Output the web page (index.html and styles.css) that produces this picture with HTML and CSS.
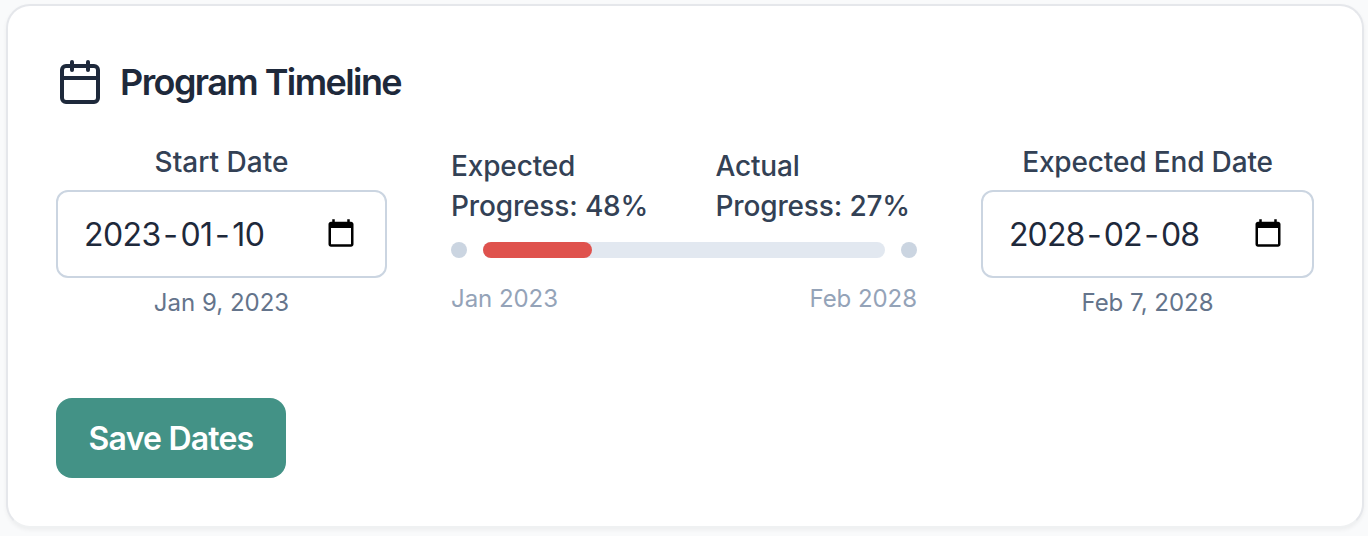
FILE: index.html
```html
<!DOCTYPE html>
<html lang="en">
<head>
<meta charset="utf-8">
<title>Program Timeline</title>
<link rel="stylesheet" href="styles.css">
</head>
<body>
<section class="card">
  <header class="card-header">
    <svg class="header-icon" viewBox="0 0 24 24" fill="none" stroke="currentColor" stroke-width="2" stroke-linecap="round" stroke-linejoin="round"><path d="M8 2v4"/><path d="M16 2v4"/><rect width="18" height="18" x="3" y="4" rx="2"/><path d="M3 10h18"/></svg>
    <h2 class="title">Program Timeline</h2>
  </header>
  <div class="timeline">
    <div class="date-col">
      <span class="label label-start">Start Date</span>
      <div class="date-field">
        <span class="date-value">2023<i class="dash">-</i>01<i class="dash">-</i>10</span>
        <svg class="picker-icon" viewBox="0 0 24 24"><path d="M20 3h-1V1h-2v2H7V1H5v2H4c-1.100 0-2 .9-2 2v16c0 1.100.9 2 2 2h16c1.100 0 2-.9 2-2V5c0-1.100-.9-2-2-2zm0 18H4V8h16v13z"/></svg>
      </div>
      <span class="caption">Jan 9, 2023</span>
    </div>
    <div class="progress">
      <div class="progress-labels">
        <span class="label">Expected<br>Progress: 48%</span>
        <span class="label label-actual">Actual<br>Progress: 27%</span>
      </div>
      <div class="track-row">
        <span class="dot"></span>
        <div class="track"><div class="fill" style="width: 27%"></div></div>
        <span class="dot"></span>
      </div>
      <div class="range"><span>Jan 2023</span><span>Feb 2028</span></div>
    </div>
    <div class="date-col">
      <span class="label label-end">Expected End Date</span>
      <div class="date-field date-field-end">
        <span class="date-value">2028<i class="dash">-</i>02<i class="dash">-</i>08</span>
        <svg class="picker-icon" viewBox="0 0 24 24"><path d="M20 3h-1V1h-2v2H7V1H5v2H4c-1.100 0-2 .9-2 2v16c0 1.100.9 2 2 2h16c1.100 0 2-.9 2-2V5c0-1.100-.9-2-2-2zm0 18H4V8h16v13z"/></svg>
      </div>
      <span class="caption">Feb 7, 2028</span>
    </div>
  </div>
  <button class="save" type="button">Save Dates</button>
</section>
</body>
</html>
```

FILE: styles.css
```css
* { box-sizing: border-box; }
body {
  margin: 0;
  height: 536px;
  padding: 4px 4px 8px 6px;
  overflow: hidden;
  background: #f9fafb;
  font-family: Inter, "Liberation Sans", sans-serif;
}
.card {
  height: 524px;
  padding: 48px;
  border: 2px solid #e5e7eb;
  border-bottom-color: #eff1f2;
  border-radius: 24px;
  background: #fff;
  box-shadow: 0 2px 4px rgba(0, 0, 0, 0.05);
}
.card-header {
  display: flex;
  align-items: center;
  gap: 16px;
  height: 56px;
  color: #1e293b;
}
.header-icon { width: 48px; height: 48px; }
.title {
  margin: 0;
  font-size: 36px;
  line-height: 56px;
  font-weight: 600;
  letter-spacing: -1.58px;
}
.timeline {
  display: grid;
  grid-template-columns: 331px 466px 333px;
  column-gap: 64px;
  margin-top: 32px;
}
.date-col {
  display: flex;
  flex-direction: column;
  align-items: center;
}
.label {
  color: #334155;
  font-size: 28px;
  line-height: 40px;
  font-weight: 500;
  letter-spacing: -0.15px;
  white-space: nowrap;
}
.label-start { letter-spacing: 0; }
.date-field {
  display: flex;
  align-items: center;
  justify-content: space-between;
  align-self: stretch;
  height: 88px;
  margin-top: 8px;
  padding: 0 29px 2px 26px;
  border: 2px solid #cbd5e1;
  border-radius: 12px;
}
.date-value {
  padding-top: 4px;
  color: #1e293b;
  font-size: 32px;
  line-height: 48px;
  letter-spacing: -0.55px;
}
.date-field-end .date-value { letter-spacing: -0.9px; }
.dash { font-style: normal; padding: 0 3px 0 2.5px; }
.picker-icon { width: 30px; height: 30px; }
.caption {
  margin-top: 9px;
  color: #64748b;
  font-size: 24px;
  line-height: 32px;
}
.progress { padding-top: 4px; }
.progress-labels {
  display: grid;
  grid-template-columns: 264.5px 1fr;
}
.track-row {
  display: flex;
  align-items: center;
  gap: 16px;
  margin-top: 16px;
}
.dot {
  width: 16px;
  height: 16px;
  border-radius: 50%;
  background: #cbd5e1;
}
.track {
  flex: 1;
  height: 16px;
  border-radius: 8px;
  background: #e2e8f0;
}
.fill {
  height: 16px;
  border-radius: 8px;
  background: #df524d;
}
.range {
  display: flex;
  justify-content: space-between;
  margin-top: 25px;
  color: #94a3b8;
  font-size: 24px;
  line-height: 32px;
  letter-spacing: -0.05px;
}
.save {
  display: block;
  width: 230px;
  height: 80px;
  margin-top: 79px;
  padding: 2px 0 0;
  border: 0;
  border-radius: 16px;
  background: #439286;
  color: #fff;
  font: 600 32px/48px Inter, "Liberation Sans", sans-serif;
  letter-spacing: -0.8px;
}
```
